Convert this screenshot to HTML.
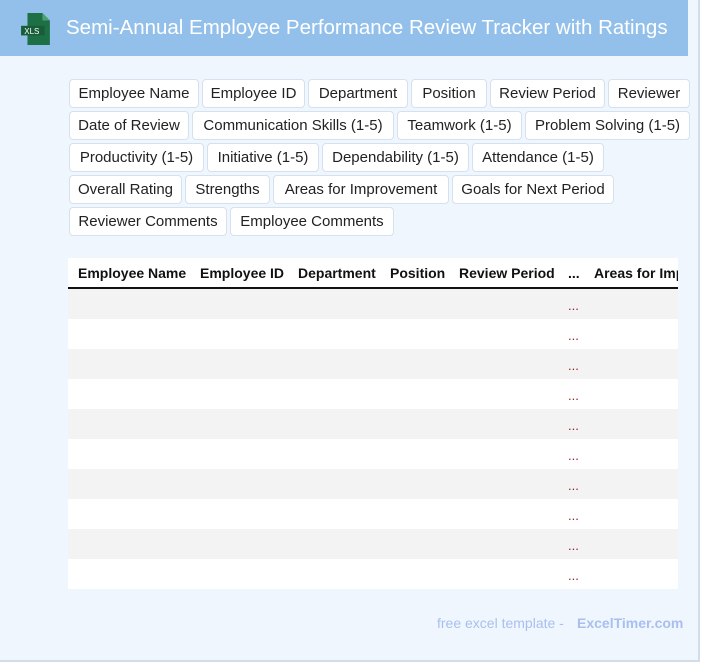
<!DOCTYPE html>
<html><head><meta charset="utf-8"><style>
*{box-sizing:border-box;margin:0;padding:0}
body{width:702px;height:664px;background:#fff;font-family:"Liberation Sans",Arial,sans-serif;overflow:hidden}
.wrap{position:absolute;left:0;top:0;width:700px;height:662px;background:#eff6fe;border-right:2px solid #d3dde8;border-bottom:2px solid #d3dde8}
.hdr{position:absolute;left:0;top:0;width:688px;height:56px;background:#93c0ea}
.hdr h1{position:absolute;left:66px;top:16px;font-size:20.5px;font-weight:normal;color:#fff;white-space:nowrap}
.tag{position:absolute;height:29px;background:#fff;border:1px solid #d5e1ee;border-radius:4px;font-size:15px;line-height:27px;text-align:center;color:#222;white-space:nowrap;overflow:hidden}
.tbl{position:absolute;left:68px;top:258px;width:610px;height:331px;background:#fff;overflow:hidden}
.th{position:absolute;top:7px;font-size:14px;font-weight:bold;color:#111;white-space:nowrap}
.line{position:absolute;left:0;top:29px;width:610px;height:2px;background:#111}
.row{position:absolute;left:0;width:610px;height:30px}
.row span{position:absolute;left:500px;top:9px;font-size:13px;color:#9b1c1c}
.foot{position:absolute;top:615px;font-size:14px;color:#a9bff0}
</style></head><body><div class="wrap">
<div class="hdr">
<svg style="position:absolute;left:21px;top:13px" width="30" height="32" viewBox="0 0 28 30"><path d="M6 0h14l7 7v23H6z" fill="#1d7045"/><path d="M20 0v7h7z" fill="#4aa06f"/><rect x="0" y="12" width="22" height="9" fill="#185c38"/><text x="3" y="19.5" font-size="7.5" fill="#fff" font-family="Liberation Sans">XLS</text></svg>
<h1>Semi-Annual Employee Performance Review Tracker with Ratings</h1></div>
<div class="tag" style="left:69px;top:79px;width:130px">Employee Name</div>
<div class="tag" style="left:202px;top:79px;width:103px">Employee ID</div>
<div class="tag" style="left:308px;top:79px;width:100px">Department</div>
<div class="tag" style="left:411px;top:79px;width:76px">Position</div>
<div class="tag" style="left:490px;top:79px;width:115px">Review Period</div>
<div class="tag" style="left:608px;top:79px;width:82px">Reviewer</div>
<div class="tag" style="left:69px;top:111px;width:120px">Date of Review</div>
<div class="tag" style="left:192px;top:111px;width:202px">Communication Skills (1-5)</div>
<div class="tag" style="left:397px;top:111px;width:125px">Teamwork (1-5)</div>
<div class="tag" style="left:525px;top:111px;width:165px">Problem Solving (1-5)</div>
<div class="tag" style="left:69px;top:143px;width:135px">Productivity (1-5)</div>
<div class="tag" style="left:207px;top:143px;width:112px">Initiative (1-5)</div>
<div class="tag" style="left:322px;top:143px;width:147px">Dependability (1-5)</div>
<div class="tag" style="left:472px;top:143px;width:132px">Attendance (1-5)</div>
<div class="tag" style="left:69px;top:175px;width:113px">Overall Rating</div>
<div class="tag" style="left:185px;top:175px;width:85px">Strengths</div>
<div class="tag" style="left:273px;top:175px;width:176px">Areas for Improvement</div>
<div class="tag" style="left:452px;top:175px;width:162px">Goals for Next Period</div>
<div class="tag" style="left:69px;top:207px;width:158px">Reviewer Comments</div>
<div class="tag" style="left:230px;top:207px;width:164px">Employee Comments</div>
<div class="tbl">
<div class="th" style="left:10px">Employee Name</div>
<div class="th" style="left:132px">Employee ID</div>
<div class="th" style="left:230px">Department</div>
<div class="th" style="left:322px">Position</div>
<div class="th" style="left:391px">Review Period</div>
<div class="th" style="left:500px">...</div>
<div class="th" style="left:526px">Areas for Improvement</div>
<div class="line"></div>
<div class="row" style="top:31px;background:#f3f3f3"><span>...</span></div>
<div class="row" style="top:61px"><span>...</span></div>
<div class="row" style="top:91px;background:#f3f3f3"><span>...</span></div>
<div class="row" style="top:121px"><span>...</span></div>
<div class="row" style="top:151px;background:#f3f3f3"><span>...</span></div>
<div class="row" style="top:181px"><span>...</span></div>
<div class="row" style="top:211px;background:#f3f3f3"><span>...</span></div>
<div class="row" style="top:241px"><span>...</span></div>
<div class="row" style="top:271px;background:#f3f3f3"><span>...</span></div>
<div class="row" style="top:301px"><span>...</span></div>
</div>
<div class="foot" style="left:437px">free excel template -</div>
<div class="foot" style="left:577px;font-weight:bold">ExcelTimer.com</div>
</div></body></html>
